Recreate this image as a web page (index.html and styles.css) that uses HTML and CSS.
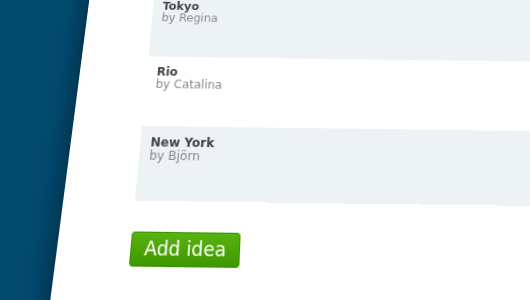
FILE: index.html
```html
<!DOCTYPE html>
<html>
<head>
<meta charset="utf-8">
<link rel="stylesheet" href="styles.css">
</head>
<body>
<div class="viewport">
  <div class="panel">
    <ul class="ideas">
      <li class="idea shaded"><div class="title">Tokyo</div><div class="author">by Regina</div></li>
      <li class="idea"><div class="title">Rio</div><div class="author">by Catalina</div></li>
      <li class="idea shaded"><div class="title">New York</div><div class="author">by Björn</div></li>
    </ul>
    <button class="add">Add idea</button>
  </div>
</div>
</body>
</html>
```
FILE: styles.css
```css
html, body {
  margin: 0;
  padding: 0;
  background: #014a6e;
}
.viewport {
  width: 530px;
  height: 300px;
  overflow: hidden;
  background: #014a6e;
}
.panel {
  width: 520px;
  height: 420px;
  padding: 6px 0 0 69px;
  background: #ffffff;
  box-shadow: -3px 0 22px rgba(0, 12, 28, 0.5);
  transform-origin: 0 0;
  transform: matrix3d(1, 0.013, 0, 0, -0.1677, 0.9346, 0, -0.000519, 0, 0, 1, 0, 142, 126, 0, 1) translate(-69px, -150px);
  font-family: "DejaVu Sans", Verdana, sans-serif;
}
.ideas {
  list-style: none;
  margin: 0;
  padding: 0;
}
.idea {
  height: 72px;
  box-sizing: border-box;
  padding: 9px 10px 0;
}
.shaded {
  background: #edf2f5;
}
.title {
  font-size: 12px;
  line-height: 14px;
  font-weight: bold;
  color: #444444;
}
.author {
  font-size: 12px;
  line-height: 12px;
  color: #8a8a8a;
}
.add {
  display: block;
  margin-top: 28px;
  height: 31px;
  padding: 0 12px;
  border: 1px solid #3d9200;
  border-radius: 3px;
  background: linear-gradient(#57b30f, #3f9700);
  color: #ffffff;
  font-family: "DejaVu Sans", Verdana, sans-serif;
  font-size: 17.5px;
  line-height: 29px;
}
```
